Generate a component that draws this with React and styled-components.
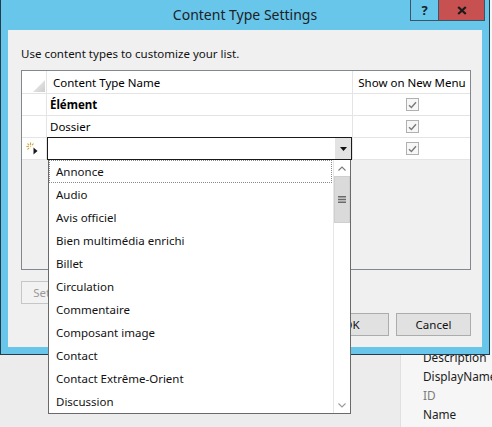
import React from "react";
import styled, { createGlobalStyle } from "styled-components";

const Global = createGlobalStyle`
  html, body { margin: 0; padding: 0; }
  body {
    background: #ececec;
    font-family: "Noto Sans", "Open Sans", sans-serif;
    font-size: 11.5px;
    color: #000;
  }
  * { box-sizing: border-box; }
`;

const Desktop = styled.div`
  position: relative;
  width: 492px;
  height: 427px;
  overflow: hidden;
  display: flex;
  background: #ececec;
`;

const BackArea = styled.div`
  flex: 0 0 400px;
  background: #ececec;
`;

const SidePanel = styled.div`
  flex: 1;
  background: #f6f6f6;
  border-left: 1px solid #e0e0e0;
  padding: 348px 0 0 22px;
  display: flex;
  flex-direction: column;
`;

const PropItem = styled.div`
  height: 19px;
  line-height: 19px;
  font-size: 11.8px;
  white-space: nowrap;
  color: ${(p) => (p.$muted ? "#7c7c7c" : "#1c1c1c")};
`;

const Dialog = styled.div`
  position: absolute;
  left: 0;
  top: 0;
  width: 490px;
  height: 355px;
  border: 1px solid #243c4c;
  border-top: none;
  background: #68c6ea;
  display: flex;
  flex-direction: column;
`;

const TitleBar = styled.div`
  height: 30px;
  flex-shrink: 0;
  display: grid;
  grid-template-columns: 1fr auto 1fr;
`;

const Title = styled.div`
  grid-column: 2;
  align-self: center;
  font-size: 14px;
  color: #1c2228;
  padding-bottom: 1px;
`;

const Controls = styled.div`
  grid-column: 3;
  justify-self: end;
  align-self: start;
  display: flex;
  margin-right: 4px;
`;

const CtrlButton = styled.div`
  height: 21px;
  width: ${(p) => p.$w}px;
  display: flex;
  align-items: center;
  justify-content: center;
  background: ${(p) => p.$bg};
  border: 1px solid #3a5666;
  border-top: none;
  margin-left: -1px;
  font-weight: bold;
  font-size: 13px;
  color: #15222c;
`;

const Body = styled.div`
  flex: 1;
  margin: 0 7px 7px;
  background: #f0f0f0;
  padding: 16px 11px 11px 13px;
  display: flex;
  flex-direction: column;
`;

const Intro = styled.div`
  line-height: 16px;
  margin-bottom: 8px;
  color: #101010;
`;

const Grid = styled.div`
  height: 200px;
  flex-shrink: 0;
  border: 1px solid #828790;
  background: #f0f0f0;
  display: flex;
  flex-direction: column;
`;

const Row = styled.div`
  display: grid;
  grid-template-columns: 25px 306px 1fr;
  height: ${(p) => (p.$header ? 23 : 22)}px;
  background: #fff;
  border-bottom: 1px solid #e4e4e4;
`;

const RowHead = styled.div`
  border-right: 1px solid #e4e4e4;
  display: flex;
  align-items: ${(p) => (p.$corner ? "flex-end" : "center")};
  justify-content: ${(p) => (p.$corner ? "flex-end" : "flex-start")};
  padding: ${(p) => (p.$corner ? "0 1px 1px 0" : "0 0 0 4px")};
`;

const NameCell = styled.div`
  border-right: 1px solid #e4e4e4;
  display: flex;
  align-items: center;
  padding-left: ${(p) => (p.$header ? 6 : 3)}px;
  font-weight: ${(p) => (p.$bold ? "bold" : "normal")};
  white-space: nowrap;
  position: relative;
`;

const CheckCell = styled.div`
  display: flex;
  align-items: center;
  justify-content: center;
  white-space: nowrap;
  padding-left: 1px;
`;

const CheckBox = styled.div`
  width: 13px;
  height: 13px;
  border: 1px solid #b0b0b0;
  background: #f7f7f7;
  display: flex;
  align-items: center;
  justify-content: center;
`;

const Combo = styled.div`
  position: absolute;
  left: 0;
  right: 0;
  top: -1px;
  height: 23px;
  border: 1px solid #1a1a1a;
  background: #fff;
  display: flex;
  justify-content: flex-end;
`;

const ComboButton = styled.div`
  width: 16px;
  background: #e3e3e3;
  display: flex;
  align-items: center;
  justify-content: center;
`;

const DropList = styled.div`
  position: absolute;
  left: 0;
  top: calc(100% + 1px);
  width: 303px;
  height: 254px;
  background: #fff;
  border: 1px solid #6a6a6a;
  border-top: none;
  display: flex;
  z-index: 5;
`;

const Items = styled.div`
  flex: 1;
  display: flex;
  flex-direction: column;
  padding-right: 1px;
`;

const Item = styled.div`
  height: 23px;
  flex-shrink: 0;
  display: flex;
  align-items: center;
  padding-left: 6px;
  color: #111;
  white-space: nowrap;
  border: 1px dotted ${(p) => (p.$focus ? "#8a8a8a" : "transparent")};
`;

const ScrollBar = styled.div`
  width: 17px;
  border-left: 1px solid #e6e6e6;
  display: flex;
  flex-direction: column;
`;

const ScrollArrow = styled.div`
  height: 16px;
  display: flex;
  align-items: center;
  justify-content: center;
`;

const Track = styled.div`
  flex: 1;
  display: flex;
  flex-direction: column;
`;

const Thumb = styled.div`
  height: 47px;
  background: #dadada;
  border: 1px solid #cfcfcf;
  display: flex;
  align-items: center;
  justify-content: center;
`;

const ButtonBar = styled.div`
  display: flex;
  justify-content: ${(p) => (p.$end ? "flex-end" : "flex-start")};
  gap: 7px;
  margin-top: ${(p) => p.$mt}px;
`;

const Button = styled.button`
  width: ${(p) => p.$w || 75}px;
  height: 23px;
  padding: 0;
  font: inherit;
  border: 1px solid ${(p) => (p.disabled ? "#c6c6c6" : "#acacac")};
  background: ${(p) => (p.disabled ? "#f2f2f2" : "#e1e1e1")};
  color: ${(p) => (p.disabled ? "#9a9a9a" : "#111")};
`;

const items = [
  "Annonce",
  "Audio",
  "Avis officiel",
  "Bien multimédia enrichi",
  "Billet",
  "Circulation",
  "Commentaire",
  "Composant image",
  "Contact",
  "Contact Extrême-Orient",
  "Discussion",
];

const Check = () => (
  <CheckBox>
    <svg width="9" height="8" viewBox="0 0 9 8">
      <path d="M1 4.2 L3.4 6.5 L8 1.2" fill="none" stroke="#7a7a7a" strokeWidth="1.4" />
    </svg>
  </CheckBox>
);

const CornerGlyph = () => (
  <svg width="12" height="12" viewBox="0 0 12 12">
    <defs>
      <linearGradient id="cg" x1="0" y1="0" x2="1" y2="1">
        <stop offset="0" stopColor="#f2f2f2" />
        <stop offset="1" stopColor="#cdcdcd" />
      </linearGradient>
    </defs>
    <path d="M12 0 L12 12 L0 12 Z" fill="url(#cg)" />
  </svg>
);

const NewRowGlyph = () => (
  <svg width="14" height="14" viewBox="0 0 14 14">
    <g stroke="#d0a640" strokeWidth="1.1" strokeLinecap="round">
      <path d="M4.5 0.8 V2.4" />
      <path d="M0.8 4.5 H2.4" />
      <path d="M1.8 1.8 L2.8 2.8" />
      <path d="M7.2 1.8 L6.2 2.8" />
      <path d="M1.8 7.2 L2.8 6.2" />
      <path d="M4.5 4 L4.6 4.6" stroke="#e6c060" />
    </g>
    <path d="M7.5 5.5 L11.5 9 L7.5 12.5 Z" fill="#1a1a1a" />
  </svg>
);

export default function App() {
  return (
    <>
      <Global />
      <Desktop>
        <BackArea />
        <SidePanel>
          <PropItem>Description</PropItem>
          <PropItem>DisplayName</PropItem>
          <PropItem $muted>ID</PropItem>
          <PropItem>Name</PropItem>
        </SidePanel>

        <Dialog>
          <TitleBar>
            <Title>Content Type Settings</Title>
            <Controls>
              <CtrlButton $w={29} $bg="#68c6ea">?</CtrlButton>
              <CtrlButton $w={47} $bg="#c75150">
                <svg width="10" height="9" viewBox="0 0 10 9">
                  <path d="M1.2 1 L8.8 8 M8.8 1 L1.2 8" stroke="#1b1b1b" strokeWidth="2.2" />
                </svg>
              </CtrlButton>
            </Controls>
          </TitleBar>

          <Body>
            <Intro>Use content types to customize your list.</Intro>
            <Grid>
              <Row $header>
                <RowHead $corner>
                  <CornerGlyph />
                </RowHead>
                <NameCell $header>Content Type Name</NameCell>
                <CheckCell>Show on New Menu</CheckCell>
              </Row>
              <Row>
                <RowHead />
                <NameCell $bold>Élément</NameCell>
                <CheckCell>
                  <Check />
                </CheckCell>
              </Row>
              <Row>
                <RowHead />
                <NameCell>Dossier</NameCell>
                <CheckCell>
                  <Check />
                </CheckCell>
              </Row>
              <Row>
                <RowHead>
                  <NewRowGlyph />
                </RowHead>
                <NameCell>
                  <Combo>
                    <ComboButton>
                      <svg width="7" height="4" viewBox="0 0 7 4">
                        <path d="M0 0 H7 L3.5 4 Z" fill="#111" />
                      </svg>
                    </ComboButton>
                    <DropList>
                      <Items>
                        {items.map((t, i) => (
                          <Item key={t} $focus={i === 0}>
                            {t}
                          </Item>
                        ))}
                      </Items>
                      <ScrollBar>
                        <ScrollArrow>
                          <svg width="8" height="5" viewBox="0 0 8 5">
                            <path d="M0.5 4.5 L4 1 L7.5 4.5" fill="none" stroke="#7a7a7a" strokeWidth="1.1" />
                          </svg>
                        </ScrollArrow>
                        <Track>
                          <Thumb>
                            <svg width="8" height="7" viewBox="0 0 8 7">
                              <path d="M0 0.75 H8 M0 3.5 H8 M0 6.25 H8" stroke="#6a6a6a" strokeWidth="1.3" />
                            </svg>
                          </Thumb>
                        </Track>
                        <ScrollArrow>
                          <svg width="8" height="5" viewBox="0 0 8 5">
                            <path d="M0.5 0.5 L4 4 L7.5 0.5" fill="none" stroke="#9a9a9a" strokeWidth="1.1" />
                          </svg>
                        </ScrollArrow>
                      </ScrollBar>
                    </DropList>
                  </Combo>
                </NameCell>
                <CheckCell>
                  <Check />
                </CheckCell>
              </Row>
            </Grid>
            <ButtonBar $mt={11}>
              <Button disabled $w={99}>
                Set as Default
              </Button>
            </ButtonBar>
            <ButtonBar $end $mt={9}>
              <Button>OK</Button>
              <Button>Cancel</Button>
            </ButtonBar>
          </Body>
        </Dialog>
      </Desktop>
    </>
  );
}
